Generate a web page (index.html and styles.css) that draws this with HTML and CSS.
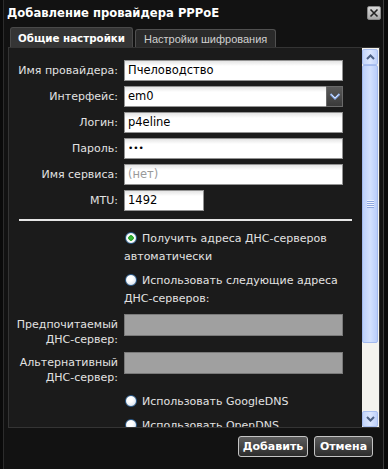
FILE: index.html
```html
<!DOCTYPE html>
<html lang="ru">
<head>
<meta charset="utf-8">
<title>Добавление провайдера PPPoE</title>
<link rel="stylesheet" href="styles.css">
</head>
<body>
<div class="window">
  <div class="titlebar">
    <span class="title">Добавление провайдера PPPoE</span>
    <span class="close"><svg width="10" height="10" viewBox="0 0 10 10"><path d="M1.5 1.5 L8.5 8.5 M8.5 1.5 L1.5 8.5" stroke="#222" stroke-width="1.6" fill="none"/></svg></span>
  </div>
  <div class="tabs">
    <div class="tab active">Общие настройки</div>
    <div class="tab">Настройки шифрования</div>
  </div>
  <div class="panel">
    <div class="content">
      <div class="form">
        <span class="label">Имя провайдера:</span><div class="field">Пчеловодство</div>
        <span class="label">Интерфейс:</span>
        <div class="field select">em0<span class="drop"><svg width="12" height="10" viewBox="0 0 12 10"><path d="M1.5 2 L6 6.5 L10.5 2" stroke="#8fb0f0" stroke-width="2" fill="none"/><path d="M2.5 2.5 L6 6 L9.5 2.5" stroke="#e8f0ff" stroke-width="0.8" fill="none"/></svg></span></div>
        <span class="label">Логин:</span><div class="field">p4eline</div>
        <span class="label">Пароль:</span><div class="field dots">•••</div>
        <span class="label">Имя сервиса:</span><div class="field placeholder">(нет)</div>
        <span class="label">MTU:</span><div class="field short">1492</div>
      </div>
      <div class="sep"></div>
      <div class="options">
        <div class="option"><span class="radio checked"></span>Получить адреса ДНС-серверов автоматически</div>
        <div class="option"><span class="radio"></span>Использовать следующие адреса ДНС-серверов:</div>
      </div>
      <div class="dns">
        <span class="label two">Предпочитаемый<br>ДНС-сервер:</span><div class="field disabled"></div>
        <span class="label two">Альтернативный<br>ДНС-сервер:</span><div class="field disabled"></div>
      </div>
      <div class="options lower">
        <div class="option"><span class="radio"></span>Использовать GoogleDNS</div>
        <div class="option"><span class="radio"></span>Использовать OpenDNS</div>
      </div>
    </div>
    <div class="scrollbar">
      <div class="sbtn"><svg width="9" height="6" viewBox="0 0 9 6"><path d="M1 5 L4.5 1.5 L8 5" stroke="#4d6185" stroke-width="2" fill="none"/></svg></div>
      <div class="thumb"><span class="grip"></span></div>
      <div class="track"></div>
      <div class="sbtn"><svg width="9" height="6" viewBox="0 0 9 6"><path d="M1 1 L4.5 4.5 L8 1" stroke="#4d6185" stroke-width="2" fill="none"/></svg></div>
    </div>
  </div>
  <div class="footer">
    <button class="btn add">Добавить</button>
    <button class="btn cancel">Отмена</button>
  </div>
</div>
</body>
</html>
```

FILE: styles.css
```css
* { box-sizing: border-box; }
html, body { margin: 0; padding: 0; }
body {
  width: 388px;
  height: 469px;
  overflow: hidden;
  background: #0a0a0a;
  font-family: "DejaVu Sans", sans-serif;
  font-size: 11px;
  color: #e2e2e2;
}
.window {
  margin-left: 3px;
  width: 381px;
  height: 469px;
  background: #121212;
  border-left: 1px solid #2c2c2c;
  border-right: 1px solid #3c3c3c;
  display: flex;
  flex-direction: column;
}
.titlebar {
  height: 25px;
  display: flex;
  align-items: center;
  justify-content: space-between;
  padding: 0 2px 0 3px;
}
.title {
  color: #fff;
  font-weight: bold;
  font-size: 11.6px;
}
.close {
  width: 14px;
  height: 14px;
  border: 1px solid #888;
  border-radius: 2px;
  background: linear-gradient(#d8d8d8, #a8a8a8);
  display: flex;
  align-items: center;
  justify-content: center;
}
.tabs {
  margin-top: 2px;
  height: 20px;
  display: flex;
  align-items: flex-end;
  gap: 2px;
  padding-left: 6px;
}
.tab {
  height: 18px;
  padding: 0 8px;
  display: flex;
  align-items: center;
  white-space: nowrap;
  background: #2a2a2a;
  border: 1px solid #505050;
  border-bottom: none;
  border-radius: 3px 3px 0 0;
  color: #d0d0d0;
  font-family: "Liberation Sans", sans-serif;
  font-size: 11px;
}
.tab.active {
  height: 20px;
  width: 123px;
  padding: 0;
  justify-content: center;
  background: #353535;
  border-color: #4a4a4a;
  color: #fff;
  font-family: "DejaVu Sans", sans-serif;
  font-weight: bold;
  font-size: 10.3px;
}
.panel {
  margin-left: 4px;
  width: 372px;
  height: 381px;
  border: 1px solid #343434;
  background: #1b1b1b;
  display: flex;
}
.content {
  flex: none;
  width: 353px;
  overflow: hidden;
  padding-top: 12px;
}
.form, .dns {
  display: grid;
  grid-template-columns: 109px 219px;
  column-gap: 6px;
  row-gap: 5px;
}
.label {
  text-align: right;
  line-height: 21px;
  white-space: nowrap;
}
.label.two {
  line-height: 15px;
  padding-top: 3px;
}
.field {
  height: 21px;
  border: 1px solid #939393;
  background: linear-gradient(#e4e4e4, #ffffff 5px);
  color: #000;
  font-size: 11.5px;
  line-height: 19px;
  padding-left: 3px;
  position: relative;
}
.field.short { width: 80px; }
.field.placeholder { color: #9a9a9a; }
.field.dots { font-size: 9px; }
.drop {
  position: absolute;
  right: -1px;
  top: -1px;
  width: 17px;
  height: 21px;
  background: linear-gradient(#5a5a5a, #3a3a3a);
  border: 1px solid #6a6a6a;
  display: flex;
  align-items: center;
  justify-content: center;
}
.field.disabled {
  background: #a0a0a0;
  border-color: #7a7a7a;
  height: 22px;
}
.sep {
  margin: 8px 0 0 10px;
  width: 333px;
  height: 2px;
  background: #e6e6e6;
}
.options {
  padding-left: 115px;
  padding-right: 8px;
  margin-top: 9px;
  display: flex;
  flex-direction: column;
  gap: 6px;
  margin-bottom: 6px;
}
.options.lower { margin-top: 8px; }
.option {
  line-height: 18px;
}
.radio {
  display: inline-block;
  width: 12px;
  height: 12px;
  border-radius: 50%;
  border: 1px solid #2a5a8a;
  background: radial-gradient(circle at 40% 35%, #ffffff 30%, #c8d6e6 100%);
  vertical-align: -2px;
  margin: 0 5px 0 1px;
}
.radio.checked {
  background: radial-gradient(circle, #3cc33c 0, #2aa02a 2.5px, #ffffff 3px, #dfe8f0 100%);
}
.scrollbar {
  flex: none;
  width: 17px;
  height: 379px;
  padding: 1px 1px 0 0;
  display: flex;
  flex-direction: column;
  background-color: #f4f3ee;
}
.sbtn {
  flex: none;
  width: 16px;
  height: 16px;
  border: 1px solid #a9bff0;
  border-radius: 2px;
  background-color: #c8d9fc;
  background-image: linear-gradient(90deg, #c3d5fb, #dce7fe 50%, #bfd1fa);
  display: flex;
  align-items: center;
  justify-content: center;
}
.thumb {
  flex: none;
  width: 16px;
  height: 278px;
  border: 1px solid #a3baee;
  border-radius: 2px;
  background-color: #c4d6fc;
  background-image: linear-gradient(90deg, #bcd0fb, #d3e1fe 50%, #b9cdfa);
  display: flex;
  align-items: center;
  justify-content: center;
}
.grip {
  width: 7px;
  height: 8px;
  background: repeating-linear-gradient(#eef3ff 0, #eef3ff 1px, #8ea8e0 1px, #8ea8e0 2px);
}
.track { flex: 1 1 auto; }
.footer {
  display: flex;
  justify-content: flex-end;
  gap: 6px;
  padding: 8px 10px 0 0;
}
.btn {
  height: 21px;
  border: 1px solid #c4c4c4;
  border-radius: 3px;
  background: linear-gradient(#5c5c5c, #2c2c2c);
  color: #fff;
  font-family: "DejaVu Sans", sans-serif;
  font-weight: bold;
  font-size: 11px;
  padding: 0;
}
.btn.add { width: 70px; }
.btn.cancel { width: 59px; }
```
